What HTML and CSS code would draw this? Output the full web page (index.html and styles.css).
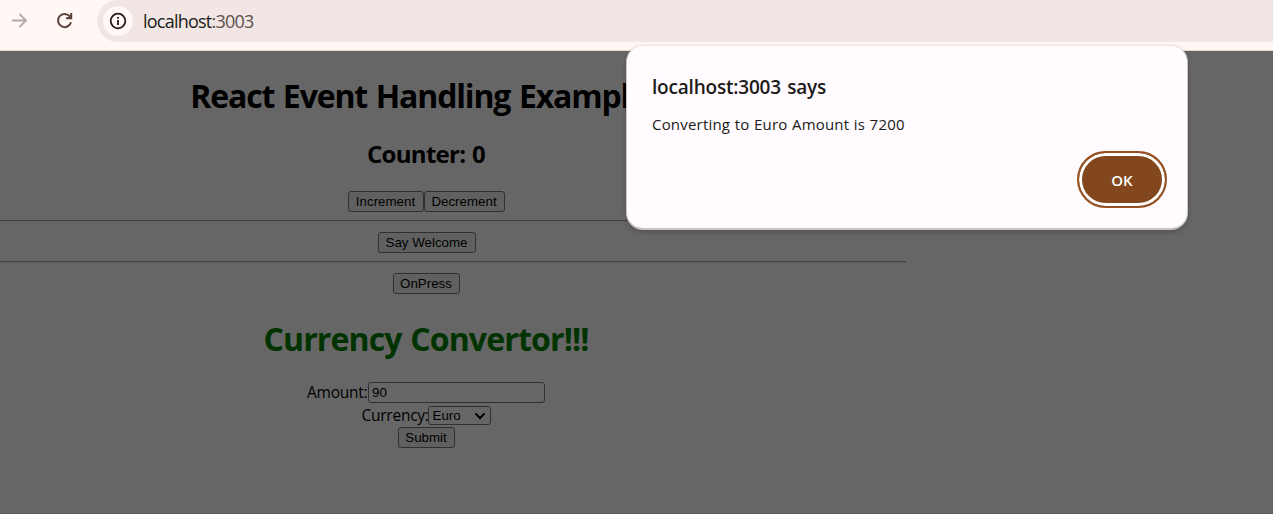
FILE: index.html
```html
<!DOCTYPE html>
<html lang="en">
<head>
<meta charset="utf-8">
<title>React App</title>
<link rel="stylesheet" href="styles.css">
</head>
<body>
<header class="toolbar">
  <svg class="forward" width="16" height="16" viewBox="0 0 16 16"><path d="M0 7.5H14M7.5 1L14 7.5L7.5 14"/></svg>
  <svg class="reload" width="18" height="18" viewBox="0 0 18 18"><path d="M15 11.2A6.6 6.6 0 1 1 13.6 5.2L15 6.7"/><path d="M15.2 2V7.3H10"/><path class="fill" d="M15.7 3V7.3H11.3Z"/></svg>
  <div class="address">
    <span class="info"><svg width="18" height="18" viewBox="0 0 18 18"><circle cx="9" cy="9" r="7.3"/><path d="M9 8V13M9 5V6.8"/></svg></span>
    <span class="url">localhost<span class="port">:3003</span></span>
  </div>
</header>
<main class="page">
  <div class="content">
    <h1 class="title"><span>React Event Handling Examples</span></h1>
    <h2 class="counter"><span>Counter: 0</span></h2>
    <div class="row"><button class="btn increment">Increment</button><button class="btn decrement">Decrement</button></div>
    <hr class="rule">
    <div class="row"><button class="btn welcome">Say Welcome</button></div>
    <hr class="rule">
    <div class="row"><button class="btn press">OnPress</button></div>
    <h1 class="convertor"><span>Currency Convertor!!!</span></h1>
    <div class="row field"><label class="amount" for="amount">Amount:</label><input class="input" id="amount" value="90"></div>
    <div class="row choice"><label class="currency">Currency:</label><div class="select"><span>Euro</span><svg width="12" height="8" viewBox="0 0 12 8"><path d="M1.5 1.5L6 6L10.5 1.5"/></svg></div></div>
    <div class="row"><button class="btn submit">Submit</button></div>
  </div>
</main>
<section class="dialog" role="alertdialog">
  <h2 class="dialog-title"><span>localhost:3003 says</span></h2>
  <p class="message"><span>Converting to Euro Amount is 7200</span></p>
  <div class="actions"><button class="ok">OK</button></div>
</section>
</body>
</html>
```
FILE: styles.css
```css
* { box-sizing: border-box; }
body {
  margin: 0;
  height: 514px;
  overflow: hidden;
  background: #666;
  color: #000;
  font-family: "Open Sans", "Noto Sans", sans-serif;
}
h1, h2, p { margin: 0; white-space: nowrap; }
svg { display: block; fill: none; }
button { font-family: "Liberation Sans", Arial, sans-serif; padding: 0; }

.toolbar {
  display: flex;
  height: 51px;
  padding-left: 12px;
  background: #fff8f5;
  border-bottom: 1px solid #efd9cf;
}
.forward { margin-top: 13px; stroke: #b3a9a5; stroke-width: 1.8; }
.reload { margin: 11px 0 0 28px; stroke: #5b4137; stroke-width: 2; }
.reload .fill { fill: #5b4137; stroke: none; }
.address {
  display: flex;
  flex: 1;
  height: 42px;
  margin-left: 23px;
  padding: 6px 0 0 6px;
  background: #f1e6e3;
  border-radius: 21px 0 0 21px;
}
.info {
  width: 30px;
  height: 30px;
  padding: 6px;
  border-radius: 50%;
  background: #fff8f5;
}
.info svg { stroke: #241a17; stroke-width: 1.8; }
.url {
  margin-left: 10px;
  font-size: 18px;
  line-height: 30px;
  letter-spacing: -0.77px;
  color: #201a18;
}
.port { color: #5c514d; }

.page { height: 463px; overflow: hidden; border-bottom: 1px solid #5d5658; }
.content { width: 960px; margin-left: -54px; padding-top: 23px; }
.title, .convertor { text-align: center; font-size: 32px; line-height: 43px; }
.title { letter-spacing: -1.15px; word-spacing: 1.5px; }
.counter { margin-top: 20px; text-align: center; font-size: 24px; line-height: 34px; letter-spacing: -0.7px; word-spacing: 1px; }
.row { display: flex; justify-content: center; height: 21px; }
.counter + .row { margin-top: 20px; }
.rule { height: 2px; margin: 8px 0 10px; border: 1px solid #424242; border-bottom-color: #606060; }
.btn {
  height: 21px;
  border: 1px solid #303030;
  border-radius: 3px;
  background: #606060;
  color: #000;
  font-size: 13.333px;
}
.increment { width: 76px; }
.decrement { width: 81px; }
.welcome { width: 98px; margin-left: 1px; }
.press { width: 67px; }
.submit { width: 57px; }
.convertor { margin-top: 23px; color: #003300; letter-spacing: -0.85px; word-spacing: 1px; }
.field { margin-top: 22px; }
.amount, .currency { font-size: 15.5px; line-height: 20px; letter-spacing: -0.25px; white-space: nowrap; }
.amount { width: 61px; }
.currency { width: 66px; line-height: 18px; }
.input {
  width: 177px;
  padding: 1px 3px;
  border: 1px solid #303030;
  border-radius: 3px;
  background: #666;
  color: #000;
  font: 13.333px "Liberation Sans", Arial, sans-serif;
}
.choice { height: 19px; margin: 3px 0 2px; }
.select {
  display: flex;
  align-items: center;
  justify-content: space-between;
  width: 63px;
  padding: 0 4px;
  border: 1px solid #303030;
  border-radius: 3px;
  font: 13.333px "Liberation Sans", Arial, sans-serif;
}
.select svg { stroke: #000; stroke-width: 2; }

.dialog {
  position: absolute;
  left: 626px;
  top: 45px;
  width: 562px;
  height: 185px;
  padding: 27px 20px 0 25px;
  border: 1px solid #c9c5bd;
  border-top-color: #efe4d8;
  border-bottom-width: 2px;
  border-radius: 17px;
  background: #fffbff;
  box-shadow: 0 2px 5px rgba(0, 0, 0, .2);
  color: #201a18;
}
.dialog-title { font-size: 19px; font-weight: 600; line-height: 28px; letter-spacing: -0.2px; word-spacing: 1.5px; }
.message { margin-top: 12px; font-size: 15px; line-height: 22px; letter-spacing: 0.2px; word-spacing: 0.4px; }
.actions { display: flex; justify-content: flex-end; margin-top: 16px; }
.ok {
  width: 90px;
  height: 57px;
  border: 2px solid #96501f;
  border-radius: 29px;
  background: #82471c;
  box-shadow: inset 0 0 0 3px #fff;
  color: #fff;
  font: 600 15px "Open Sans", sans-serif;
}
```
